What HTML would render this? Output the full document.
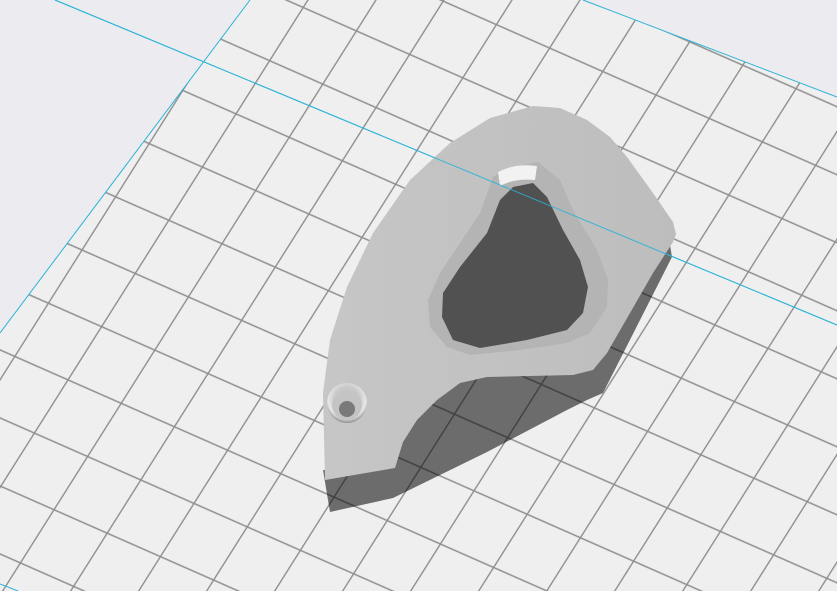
<!DOCTYPE html>
<html><head><meta charset="utf-8"><style>
html,body{margin:0;padding:0;background:#ebebf0;}
svg{display:block}
</style></head><body>
<svg width="837" height="591" viewBox="0 0 837 591" xmlns="http://www.w3.org/2000/svg">
<defs>
<pattern id="g" patternUnits="userSpaceOnUse" width="100" height="100" patternTransform="matrix(0.532,0.2345,-0.336,0.532,111.4,365.0)">
<rect width="100" height="100" fill="#efefef"/>
<line x1="0" y1="50" x2="100" y2="50" stroke="#8e8e8e" stroke-width="2.4"/>
<line x1="50" y1="0" x2="50" y2="100" stroke="#8e8e8e" stroke-width="2.4"/>
</pattern>
<linearGradient id="face" x1="0" y1="0" x2="1" y2="0">
<stop offset="0" stop-color="#c6c6c6"/><stop offset="1" stop-color="#bdbdbd"/>
</linearGradient>
<radialGradient id="scr" cx="0.5" cy="0.4" r="0.6">
<stop offset="0.5" stop-color="#c8c8c8"/><stop offset="0.8" stop-color="#e8e8e8"/><stop offset="1" stop-color="#8a8a8a"/>
</radialGradient>
</defs>
<rect width="837" height="591" fill="#ebebf0"/>
<polygon points="250,0 583,0 837,97 837,591 0,591 0,333" fill="url(#g)"/>
<line x1="250" y1="0" x2="0" y2="333" stroke="#2bb3d6" stroke-width="1"/>
<line x1="583" y1="0" x2="837" y2="97" stroke="#2bb3d6" stroke-width="1"/>
<line x1="0" y1="584" x2="18" y2="591" stroke="#2bb3d6" stroke-width="1"/>
<polygon points="323,470 330,512 393,498 487,452 567,410 587,400 603,393 672,257 670,245 600,350 487,372 455,380 432,398 412,420 399,442 392,468" fill="#000" fill-opacity="0.55"/>
<line x1="55" y1="0" x2="837" y2="325" stroke="#2bb3d6" stroke-width="1"/>
<path d="M325,480 L323,393 L330,340 L347,287 L373,233 L410,180 L450,143 L490,118 L533,106 L560,108 L587,120 L610,137 L627,157 L653,193 L673,222 L676,234 L673,242 L653,273 L630,313 L607,353 L593,370 L573,375 L487,377 L460,383 L437,400 L417,420 L403,442 L395,468 Z" fill="url(#face)"/>
<path d="M538,162 L560,180 L573,210 L597,250 L608,280 L607,307 L590,333 L567,343 L520,350 L470,355 L447,347 L430,327 L428,300 L440,273 L460,243 L480,213 L493,177 L507,168 L523,165 Z" fill="#b4b4b4"/>
<path d="M498,172 Q515,163 537,166 L535,180 Q515,178 500,186 Z" fill="#f2f2f2"/>
<path d="M533,183 L547,197 L563,230 L580,260 L588,287 L583,313 L567,330 L527,340 L480,348 L453,340 L442,317 L443,293 L460,267 L487,233 L500,200 L513,187 Z" fill="#000" fill-opacity="0.55"/>
<line x1="55" y1="0" x2="837" y2="325" stroke="#2bb3d6" stroke-width="1" opacity="0.9"/>
<circle cx="347" cy="403" r="20" fill="url(#scr)"/>
<circle cx="347" cy="405" r="15" fill="#c4c4c4"/>
<circle cx="347" cy="409" r="8" fill="#7a7a7a"/>
</svg>
</body></html>
